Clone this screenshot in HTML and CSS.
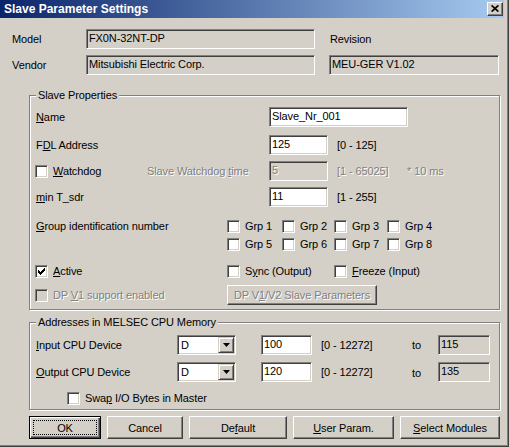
FILE: index.html
```html
<!DOCTYPE html>
<html>
<head>
<meta charset="utf-8">
<title>Slave Parameter Settings</title>
<link rel="stylesheet" href="styles.css">
</head>
<body>
<div class="window">
  <div class="titlebar">
    <span class="title">Slave Parameter Settings</span>
    <span class="close-btn"><svg width="8" height="7" viewBox="0 0 8 7"><path d="M0.6 0.4 L7.4 6.6 M7.4 0.4 L0.6 6.6" stroke="#000" stroke-width="1.7" fill="none"/></svg></span>
  </div>
  <div class="client">
    <div class="info">
      <span class="lbl">Model</span>
      <span class="field ro">FX0N-32NT-DP</span>
      <span></span>
      <span class="lbl rev">Revision</span>
      <span class="lbl">Vendor</span>
      <span class="field ro">Mitsubishi Electric Corp.</span>
      <span></span>
      <span class="field ro">MEU-GER V1.02</span>
    </div>

    <div class="group props">
      <span class="legend">Slave Properties</span>
      <div class="row">
        <span class="col-label"><u>N</u>ame</span>
        <span class="field w139">Slave_Nr_001</span>
      </div>
      <div class="row r2">
        <span class="col-label">F<u>D</u>L Address</span>
        <span class="field w59">125</span>
        <span class="range">[0 - 125]</span>
      </div>
      <div class="row r3">
        <span class="check wd"><span class="cb"></span><span><u>W</u>atchdog</span></span>
        <span class="dis wdtime">Slave Watchdog <u>t</u>ime</span>
        <span class="field w59 disabled">5</span>
        <span class="range dis w70">[1 - 65025]</span>
        <span class="dis">* 10 ms</span>
      </div>
      <div class="row r3">
        <span class="col-label"><u>m</u>in T_sdr</span>
        <span class="field w59">11</span>
        <span class="range">[1 - 255]</span>
      </div>
      <div class="grp-block">
        <span class="grp-label"><u>G</u>roup identification number</span>
        <div class="grp-grid">
          <span class="check"><span class="cb"></span><span>Grp 1</span></span>
          <span class="check"><span class="cb"></span><span>Grp 2</span></span>
          <span class="check"><span class="cb"></span><span>Grp 3</span></span>
          <span class="check"><span class="cb"></span><span>Grp 4</span></span>
          <span class="check"><span class="cb"></span><span>Grp 5</span></span>
          <span class="check"><span class="cb"></span><span>Grp 6</span></span>
          <span class="check"><span class="cb"></span><span>Grp 7</span></span>
          <span class="check"><span class="cb"></span><span>Grp 8</span></span>
        </div>
      </div>
      <div class="row crow active-row">
        <span class="check c192"><span class="cb"><svg width="7" height="7" viewBox="0 0 7 7"><path d="M0 2h1v1h1v1h1v-1h1v-1h1v-1h1v-1h1v3h-1v1h-1v1h-1v1h-1v1h-1v-1h-1v-1h-1z" fill="#000"/></svg></span><span><u>A</u>ctive</span></span>
        <span class="check c107"><span class="cb"></span><span>S<u>y</u>nc (Output)</span></span>
        <span class="check"><span class="cb"></span><span><u>F</u>reeze (Input)</span></span>
      </div>
      <div class="row dp-row">
        <span class="check c192"><span class="cb cb-dis"></span><span class="dis">DP <u>V</u>1 support enabled</span></span>
        <span class="btn btn-dis"><span class="dis">DP V<u>1</u>/V2 Slave Parameters</span></span>
      </div>
    </div>

    <div class="group addr">
      <span class="legend">Addresses in MELSEC CPU Memory</span>
      <div class="row">
        <span class="addr-label"><u>I</u>nput CPU Device</span>
        <span class="combo"><span class="combo-text">D</span><span class="drop"><svg width="7" height="4" viewBox="0 0 7 4"><path d="M0 0h7l-3.5 4z" fill="#000"/></svg></span></span>
        <span class="field w51">100</span>
        <span class="range w91">[0 - 12272]</span>
        <span class="to">to</span>
        <span class="field ro w52">115</span>
      </div>
      <div class="row r-out">
        <span class="addr-label"><u>O</u>utput CPU Device</span>
        <span class="combo"><span class="combo-text">D</span><span class="drop"><svg width="7" height="4" viewBox="0 0 7 4"><path d="M0 0h7l-3.5 4z" fill="#000"/></svg></span></span>
        <span class="field w51">120</span>
        <span class="range w91">[0 - 12272]</span>
        <span class="to to2">to</span>
        <span class="field ro w52">135</span>
      </div>
      <div class="row crow swap-row">
        <span class="check"><span class="cb"></span><span>Swa<u>p</u> I/O Bytes in Master</span></span>
      </div>
    </div>

    <div class="buttons">
      <span class="btn btn-default b72"><span class="focus"></span>OK</span>
      <span class="btn b76">Cancel</span>
      <span class="btn b98">De<u>f</u>ault</span>
      <span class="btn b101"><u>U</u>ser Param.</span>
      <span class="btn b100"><u>S</u>elect Modules</span>
    </div>
  </div>
</div>
</body>
</html>
```

FILE: styles.css
```css
html, body {
  margin: 0;
  padding: 0;
  background: #d4d0c8;
}

body {
  font-family: "Liberation Sans", Arial, sans-serif;
  font-size: 11px;
  letter-spacing: -0.1px;
  color: #000;
}

u {
  text-decoration: underline;
  text-underline-offset: 1px;
}

.window {
  width: 509px;
  height: 447px;
  box-sizing: border-box;
  background: #d4d0c8;
  box-shadow: inset -1px -1px 0 #404040, inset -2px -2px 0 #808080;
  overflow: hidden;
}

.titlebar {
  width: 504px;
  height: 18px;
  box-sizing: border-box;
  padding: 0 1px 0 4px;
  display: flex;
  align-items: center;
  background: linear-gradient(to right, #0a246a, #a6caf0);
}

.title {
  color: #fff;
  font-weight: bold;
  font-size: 12px;
  letter-spacing: 0;
  flex: 1;
}

.close-btn {
  width: 16px;
  height: 14px;
  box-sizing: border-box;
  background: #d4d0c8;
  border-top: 1px solid #fff;
  border-left: 1px solid #fff;
  border-right: 1px solid #404040;
  border-bottom: 1px solid #404040;
  box-shadow: inset -1px -1px 0 #808080;
  display: flex;
  align-items: center;
  justify-content: center;
  padding-bottom: 1px;
  padding-right: 1px;
}

.close-btn svg {
  display: block;
}

.client {
  padding-top: 11px;
}

.info {
  margin-left: 12px;
  display: grid;
  grid-template-columns: 74px 229px 14px 170px;
  grid-template-rows: 20px 20px;
  row-gap: 6px;
  align-items: center;
}

.lbl.rev {
  padding-left: 1px;
}

.field {
  display: block;
  box-sizing: border-box;
  height: 20px;
  line-height: 16px;
  padding-left: 2px;
  background: #fff;
  border-top: 1px solid #808080;
  border-left: 1px solid #808080;
  border-right: 1px solid #fff;
  border-bottom: 1px solid #fff;
  box-shadow: inset 1px 1px 0 #404040, inset -1px -1px 0 #d4d0c8;
  white-space: nowrap;
  overflow: hidden;
}

.field.ro,
.field.disabled {
  background: #d4d0c8;
}

.field.disabled {
  color: #808080;
  text-shadow: 1px 1px 0 #fff;
}

.w139 { width: 139px; }
.w59 { width: 59px; }
.w51 { width: 51px; }
.w52 { width: 52px; }

.group {
  position: relative;
  margin-left: 29px;
  width: 471px;
  box-sizing: border-box;
  border: 1px solid #808080;
  box-shadow: inset 1px 1px 0 #fff, 1px 1px 0 #fff;
  padding-left: 6px;
}

.legend {
  position: absolute;
  top: -7px;
  left: 6px;
  padding: 0 2px;
  line-height: 13px;
  background: #d4d0c8;
}

.props {
  margin-top: 20px;
  height: 215px;
  padding-top: 11px;
}

.addr {
  margin-top: 12px;
  height: 88px;
  padding-top: 12px;
}

.row {
  display: flex;
  align-items: center;
  height: 20px;
  white-space: nowrap;
}

.r2 { margin-top: 8px; }
.r3 { margin-top: 6px; }

.col-label {
  width: 233px;
  flex: none;
}

.range {
  margin-left: 9px;
}

.w70 { width: 70px; flex: none; }

.dis {
  color: #808080;
  text-shadow: 1px 1px 0 #fff;
}

.check {
  display: flex;
  align-items: center;
  gap: 5px;
  white-space: nowrap;
}

.cb {
  display: flex;
  align-items: center;
  justify-content: center;
  flex: none;
  width: 13px;
  height: 13px;
  box-sizing: border-box;
  background: #fff;
  border-top: 1px solid #808080;
  border-left: 1px solid #808080;
  border-right: 1px solid #fff;
  border-bottom: 1px solid #fff;
  box-shadow: inset 1px 1px 0 #404040, inset -1px -1px 0 #d4d0c8;
}

.cb svg {
  display: block;
}

.cb-dis {
  background: #d4d0c8;
}

.wd {
  width: 112px;
  flex: none;
  margin-left: -1px;
}

.wdtime {
  width: 122px;
  flex: none;
}

.grp-block {
  display: flex;
  margin-top: 10px;
  margin-left: -1px;
}

.grp-label {
  width: 192px;
  flex: none;
  line-height: 18px;
  padding-left: 1px;
  box-sizing: border-box;
}

.grp-grid {
  display: grid;
  grid-template-columns: 55px 52px 53px auto;
  grid-auto-rows: 18px;
  align-items: center;
}

.crow {
  height: 18px;
  margin-left: -1px;
}

.active-row {
  margin-top: 9px;
}

.c192 { width: 192px; flex: none; }
.c107 { width: 107px; flex: none; }

.dp-row {
  margin-top: 5px;
  margin-left: -1px;
}

.btn {
  position: relative;
  display: flex;
  align-items: center;
  justify-content: center;
  box-sizing: border-box;
  background: #d4d0c8;
  border-top: 1px solid #fff;
  border-left: 1px solid #fff;
  border-right: 1px solid #404040;
  border-bottom: 1px solid #404040;
  box-shadow: inset -1px -1px 0 #808080;
  white-space: nowrap;
}

.btn-dis {
  width: 150px;
  height: 20px;
  flex: none;
}

.addr-label {
  width: 141px;
  flex: none;
}

.combo {
  display: flex;
  align-items: center;
  width: 59px;
  height: 20px;
  flex: none;
  box-sizing: border-box;
  background: #fff;
  border-top: 1px solid #808080;
  border-left: 1px solid #808080;
  border-right: 1px solid #fff;
  border-bottom: 1px solid #fff;
  box-shadow: inset 1px 1px 0 #404040, inset -1px -1px 0 #d4d0c8;
  padding: 1px 1px 1px 3px;
}

.combo-text {
  flex: 1;
}

.drop {
  width: 16px;
  height: 16px;
  box-sizing: border-box;
  display: flex;
  align-items: center;
  justify-content: center;
  background: #d4d0c8;
  border-top: 1px solid #d4d0c8;
  border-left: 1px solid #d4d0c8;
  border-right: 1px solid #404040;
  border-bottom: 1px solid #404040;
  box-shadow: inset 1px 1px 0 #fff, inset -1px -1px 0 #808080;
}

.drop svg {
  display: block;
}

.combo + .field {
  margin-left: 25px;
}

.w91 { width: 91px; flex: none; }

.to {
  width: 26px;
  flex: none;
}

.to2 {
  padding-top: 2px;
}

.r-out { margin-top: 7px; }

.swap-row {
  margin-top: 7px;
  margin-left: 31px;
}

.buttons {
  display: flex;
  gap: 6px;
  margin-top: 6px;
  margin-left: 29px;
}

.buttons .btn {
  height: 23px;
}

.b72 { width: 72px; }
.b76 { width: 76px; }
.b98 { width: 98px; }
.b101 { width: 101px; }
.b100 { width: 100px; }

.btn-default {
  border: 1px solid #000;
  box-shadow: inset 1px 1px 0 #fff, inset -1px -1px 0 #404040, inset -2px -2px 0 #808080;
}

.focus {
  position: absolute;
  left: 3px;
  top: 3px;
  right: 3px;
  bottom: 3px;
  border: 1px dotted #000;
}
```
